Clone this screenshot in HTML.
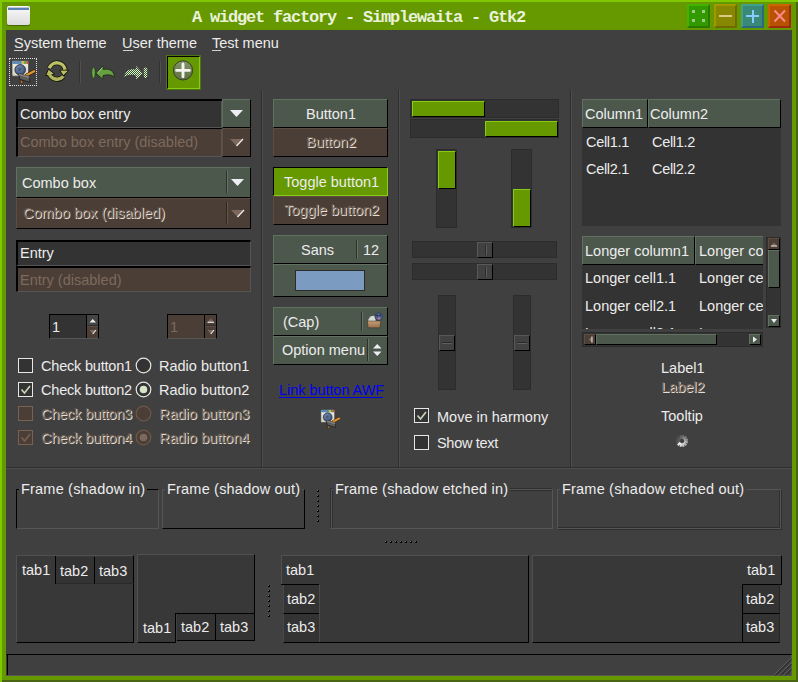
<!DOCTYPE html>
<html><head><meta charset="utf-8">
<style>
*{margin:0;padding:0;box-sizing:border-box}
html,body{width:798px;height:682px;overflow:hidden}
body{position:relative;background:#669900;font-family:"Liberation Sans",sans-serif;font-size:14.5px;color:#ececec}
.a{position:absolute}
.t{position:absolute;white-space:nowrap;line-height:17px;font-size:14.5px}
svg{position:absolute;overflow:visible}
/* widgets */
.btn{position:absolute;background:#4d584d;border-top:1px solid #627062;border-left:1px solid #627062;border-right:1px solid #000;border-bottom:1px solid #000}
.btnd{position:absolute;background:#4a3e37;border-top:1px solid #5e4c40;border-left:1px solid #5e4c40;border-right:1px solid #000;border-bottom:1px solid #000}
.ent{position:absolute;background:#333;border-top:2px solid #000;border-left:2px solid #000;border-right:1px solid #555;border-bottom:1px solid #555}
.entd{position:absolute;background:#4a3e37;border-top:2px solid #000;border-left:2px solid #000;border-right:1px solid #555;border-bottom:1px solid #555}
.dis{color:#7d6a5c}
.emb{color:#6e5d51;text-shadow:1px 1px 0 #e6e0da}
.vsep{position:absolute;width:2px;border-left:1px solid #2e2e2e;border-right:1px solid #4e4e4e}
.hsep{position:absolute;height:2px;border-top:1px solid #2e2e2e;border-bottom:1px solid #4e4e4e}
.trough{position:absolute;background:#333;border:1px solid #2c2c2c}
.bar{position:absolute;background:#669900;border-top:1px solid #88cc11;border-left:1px solid #88cc11;border-right:1px solid #000;border-bottom:1px solid #000}
.chk{position:absolute;width:15px;height:15px;border:1px solid #e6e6e6;background:#333}
.chkd{position:absolute;width:15px;height:15px;border:1px solid #7a6252;background:#4a3e37}
.tab{position:absolute;background:#333}
.nb{position:absolute;background:#383838}
</style></head><body>
<svg width="0" height="0" style="position:absolute">
<defs>
<linearGradient id="gwin" x1="0" y1="0" x2="0" y2="1"><stop offset="0" stop-color="#f2efe4"/><stop offset="1" stop-color="#d6d2c2"/></linearGradient>
<radialGradient id="gglobe" cx="0.4" cy="0.35" r="0.7"><stop offset="0" stop-color="#7890b8"/><stop offset="1" stop-color="#34486c"/></radialGradient>
<pattern id="dith" width="2" height="2" patternUnits="userSpaceOnUse"><rect width="2" height="2" fill="#2f5a22"/><rect width="1" height="1" fill="#e8f0e0"/><rect x="1" y="1" width="1" height="1" fill="#e8f0e0"/></pattern>
<symbol id="icoapp" viewBox="0 0 24 24">
<rect x="1" y="0.8" width="16.6" height="15.4" rx="1" fill="url(#gwin)" stroke="#2a2a2a" stroke-width="0.6"/>
<rect x="1.3" y="1.1" width="9.4" height="2.8" fill="#5a88b4"/>
<rect x="10.7" y="1.1" width="2.4" height="2.8" fill="#c8bc50"/>
<rect x="13.1" y="1.1" width="2.3" height="2.8" fill="#58a040"/>
<rect x="15.4" y="1.1" width="2" height="2.8" fill="#c44a40"/>
<circle cx="9.2" cy="9.8" r="5.3" fill="url(#gglobe)" stroke="#1e2a40" stroke-width="0.8"/>
<path d="M6.5 8 Q9 6.5 11 8.5 Q10 11 7.5 11.5 Z" fill="#3a4c68" opacity="0.7"/>
<path d="M23 11.2 L16 15" stroke="#2a1a08" stroke-width="3.4" stroke-linecap="round"/>
<path d="M23 11.2 L16 15" stroke="#e4952e" stroke-width="2.4" stroke-linecap="round"/>
<path d="M9.8 20 L11.8 20.4 L11.3 23.6 L9.4 23.2 Z" fill="#c07828" stroke="#2a1a08" stroke-width="0.5"/>
<path d="M8 13.6 L18.3 16.5 L18.8 22.2 L8.4 19.2 Z" fill="#5e5c5a" stroke="#1a1a1a" stroke-width="0.8"/>
<path d="M8 13.6 L18.3 16.5 L18.4 18.2 L8.1 15.3 Z" fill="#85827e"/>
</symbol>
</defs></svg>
<!-- window frame -->
<div class="a" style="left:0;top:0;width:798px;height:2px;background:#80c800"></div>
<div class="a" style="left:0;top:0;width:2px;height:682px;background:#80c800"></div>
<div class="a" style="left:796px;top:0;width:2px;height:682px;background:#4a6614"></div>
<div class="a" style="left:0;top:680px;width:798px;height:2px;background:#4a6614"></div>
<div class="a" style="left:796px;top:0;width:2px;height:2px;background:#80c800"></div>
<div class="a" style="left:0;top:680px;width:2px;height:2px;background:#80c800"></div>
<!-- content -->
<div class="a" id="content" style="left:6px;top:30px;width:786px;height:646px;background:#404040"></div>

<!-- title icon -->
<div class="a" style="left:7px;top:6px;width:23px;height:19px;border-radius:2px;background:linear-gradient(#fafafa,#dcdcdc);box-shadow:0 1px 1px rgba(0,0,0,.35)"></div>
<div class="a" style="left:8px;top:7px;width:21px;height:3px;background:#5a80b8;border-top:1px solid #c0c8d0"></div>
<!-- title -->
<div class="t" style="left:192px;top:9px;font-family:'Liberation Mono',monospace;font-weight:bold;font-size:17px;letter-spacing:-1.2px;color:#eaf2dc">A widget factory - Simplewaita - Gtk2</div>
<!-- title buttons -->
<div class="a" style="left:687px;top:4px;width:23px;height:24px;background:#339900;border-top:2px solid #44b300;border-left:2px solid #44b300;border-right:2px solid #2a7a00;border-bottom:2px solid #2a7a00"></div>
<div class="a" style="left:692px;top:10px;width:3px;height:3px;background:#99cc88"></div>
<div class="a" style="left:702px;top:10px;width:3px;height:3px;background:#99cc88"></div>
<div class="a" style="left:692px;top:19px;width:3px;height:3px;background:#99cc88"></div>
<div class="a" style="left:702px;top:19px;width:3px;height:3px;background:#99cc88"></div>
<div class="a" style="left:714px;top:4px;width:23px;height:24px;background:#888800;border-top:2px solid #a09a00;border-left:2px solid #a09a00;border-right:2px solid #6e6a00;border-bottom:2px solid #6e6a00"></div>
<div class="a" style="left:719px;top:15px;width:13px;height:2px;background:#ddc98a"></div>
<div class="a" style="left:741px;top:4px;width:23px;height:24px;background:#3a8877;border-top:2px solid #44a08a;border-left:2px solid #44a08a;border-right:2px solid #2a6a80;border-bottom:2px solid #2a6a80"></div>
<div class="a" style="left:746px;top:15px;width:13px;height:2px;background:#88ccff"></div>
<div class="a" style="left:751.5px;top:9.5px;width:2px;height:13px;background:#88ccff"></div>
<div class="a" style="left:768px;top:4px;width:23px;height:24px;background:#b85200;border-top:2px solid #cc6600;border-left:2px solid #cc6600;border-right:2px solid #a02a10;border-bottom:2px solid #a02a10"></div>
<svg style="left:768px;top:4px" width="23" height="24"><path d="M6.5 6.5 L17 17.5 M17 6.5 L6.5 17.5" stroke="#ff8a90" stroke-width="1.9"/></svg>

<!-- menubar -->
<div class="t" style="left:14px;top:35px">System theme</div>
<div class="t" style="left:122px;top:35px">User theme</div>
<div class="t" style="left:212px;top:35px">Test menu</div>
<div class="a" style="left:14px;top:50px;width:9px;height:1px;background:#d0d0d0"></div>
<div class="a" style="left:123px;top:50px;width:10px;height:1px;background:#d0d0d0"></div>
<div class="a" style="left:212px;top:50px;width:9px;height:1px;background:#d0d0d0"></div>

<!-- toolbar -->
<div class="a" style="left:9px;top:58px;width:28px;height:28px;border:1px dotted #e0e0e0"></div>
<div class="a" style="left:166px;top:55px;width:35px;height:35px;border:1px solid #4f7412"></div><div class="a" style="left:167px;top:56px;width:33px;height:33px;background:#669900;border-top:1px solid #000;border-left:1px solid #000;border-right:1px solid #88cc11;border-bottom:1px solid #88cc11"></div>
<div class="a" style="left:79px;top:61px;width:2px;height:22px;border-left:1px solid #333;border-right:1px solid #505050"></div>
<div class="a" style="left:159px;top:61px;width:2px;height:22px;border-left:1px solid #333;border-right:1px solid #505050"></div>


<!-- ===== column 1 ===== -->
<div class="ent" style="left:16px;top:99px;width:206px;height:29px;border-right-width:0"></div>
<div class="a" style="left:221px;top:101px;width:1px;height:27px;background:#555"></div>
<div class="t" style="left:20px;top:106px">Combo box entry</div>
<div class="btn" style="left:222px;top:99px;width:29px;height:29px"></div>
<svg style="left:0;top:0" width="1" height="1"><path d="M230 110 H243 L236.5 117 Z" fill="#eceef4"/></svg>
<div class="entd" style="left:16px;top:128px;width:206px;height:29px;border-top-width:1px;border-right-width:0"></div>
<div class="a" style="left:221px;top:129px;width:1px;height:28px;background:#555"></div>
<div class="t dis" style="left:20px;top:134px">Combo box entry (disabled)</div>
<div class="btnd" style="left:222px;top:128px;width:29px;height:29px"></div>
<svg style="left:0;top:0" width="1" height="1"><path d="M230 139 H243 L236.5 146 Z" fill="#7c685c"/><path d="M243 139 L236.5 146" stroke="#f0f0f0" stroke-width="1.2"/></svg>

<div class="btn" style="left:16px;top:167px;width:235px;height:31px"></div>
<div class="t" style="left:22px;top:175px">Combo box</div>
<div class="a" style="left:226px;top:171px;width:2px;height:22px;border-left:1px solid #2e2e2e;border-right:1px solid #667466"></div>
<svg style="left:0;top:0" width="1" height="1"><path d="M231 179 H244 L237.5 186 Z" fill="#eceef4"/></svg>
<div class="btnd" style="left:16px;top:198px;width:235px;height:31px"></div>
<div class="t emb" style="left:23px;top:205px">Combo box (disabled)</div>
<div class="a" style="left:226px;top:202px;width:2px;height:22px;border-left:1px solid #2e2622;border-right:1px solid #6a5444"></div>
<svg style="left:0;top:0" width="1" height="1"><path d="M231 210 H244 L237.5 217 Z" fill="#7c685c"/><path d="M244 210 L237.5 217" stroke="#f0f0f0" stroke-width="1.2"/></svg>

<div class="ent" style="left:16px;top:240px;width:235px;height:26px"></div>
<div class="t" style="left:20px;top:245px">Entry</div>
<div class="entd" style="left:16px;top:266px;width:235px;height:26px"></div>
<div class="t dis" style="left:20px;top:272px">Entry (disabled)</div>

<!-- spin buttons -->
<div class="a" style="left:49px;top:314px;width:50px;height:25px;background:#333;border-top:1px solid #000;border-left:1px solid #000;border-right:1px solid #000;border-bottom:1px solid #555"></div>
<div class="a" style="left:86px;top:315px;width:1px;height:23px;background:#000"></div>
<div class="a" style="left:87px;top:315px;width:11px;height:11px;background:#454545;border-bottom:1px solid #2e2e2e"></div>
<div class="a" style="left:87px;top:326px;width:11px;height:12px;background:#4a3e37;border-top:1px solid #5e4c40"></div>
<svg style="left:0;top:0" width="1" height="1"><path d="M89.5 322.5 H96 L92.75 319 Z" fill="#f0f0f0"/><path d="M89.5 330 H96 L92.75 334 Z" fill="#7c685c"/><path d="M96 330 L92.75 334" stroke="#f0f0f0" stroke-width="1.1"/></svg>
<div class="t" style="left:52px;top:319px">1</div>
<div class="a" style="left:167px;top:314px;width:50px;height:25px;background:#4a3e37;border-top:1px solid #000;border-left:1px solid #000;border-right:1px solid #000;border-bottom:1px solid #555"></div>
<div class="a" style="left:204px;top:315px;width:1px;height:23px;background:#000"></div>
<div class="a" style="left:205px;top:315px;width:11px;height:11px;background:#4a3e37;border-bottom:1px solid #2e2e2e"></div>
<div class="a" style="left:205px;top:326px;width:11px;height:12px;background:#4a3e37;border-top:1px solid #5e4c40"></div>
<svg style="left:0;top:0" width="1" height="1"><path d="M207.5 322 H214 L210.75 318.5 Z" fill="#7c685c"/><path d="M207.5 322.3 H214" stroke="#f0f0f0" stroke-width="1.1"/><path d="M207.5 330 H214 L210.75 334 Z" fill="#7c685c"/><path d="M214 330 L210.75 334" stroke="#f0f0f0" stroke-width="1.1"/></svg>
<div class="t dis" style="left:170px;top:319px">1</div>

<!-- check / radio -->
<div class="chk" style="left:18px;top:358px"></div>
<div class="t" style="left:41px;letter-spacing:-0.2px;top:358px">Check button1</div>
<div class="chk" style="left:18px;top:382px"></div>
<svg style="left:0;top:0" width="1" height="1"><path d="M21.5 389.5 L24.5 393 L30 386" stroke="#c8d8b8" stroke-width="1.6" fill="none"/></svg>
<div class="t" style="left:41px;letter-spacing:-0.2px;top:382px">Check button2</div>
<div class="chkd" style="left:18px;top:406px"></div>
<div class="t emb" style="left:41px;letter-spacing:-0.2px;top:406px">Check button3</div>
<div class="chkd" style="left:18px;top:430px"></div>
<svg style="left:0;top:0" width="1" height="1"><path d="M21.5 437.5 L24.5 441 L30 434" stroke="#7a6252" stroke-width="1.6" fill="none"/></svg>
<div class="t emb" style="left:41px;letter-spacing:-0.2px;top:430px">Check button4</div>
<svg style="left:0;top:0" width="1" height="1">
<circle cx="143.5" cy="365.5" r="7.3" fill="#333" stroke="#e6e6e6" stroke-width="1.2"/>
<circle cx="143.5" cy="389.5" r="7.3" fill="#333" stroke="#e6e6e6" stroke-width="1.2"/>
<circle cx="143.5" cy="389.5" r="3.8" fill="#d8e4c8"/>
<circle cx="143.5" cy="413.5" r="7.3" fill="#4a3e37" stroke="#6e5848" stroke-width="1.2"/>
<circle cx="143.5" cy="437.5" r="7.3" fill="#4a3e37" stroke="#6e5848" stroke-width="1.2"/>
<circle cx="143.5" cy="437.5" r="3.8" fill="#7c685c"/>
</svg>
<div class="t" style="left:159px;top:358px">Radio button1</div>
<div class="t" style="left:159px;top:382px">Radio button2</div>
<div class="t emb" style="left:159px;top:406px">Radio button3</div>
<div class="t emb" style="left:159px;top:430px">Radio button4</div>


<!-- ===== column 2 ===== -->
<div class="btn" style="left:273px;top:99px;width:115px;height:29px"></div>
<div class="t" style="left:306px;top:106px">Button1</div>
<div class="btnd" style="left:273px;top:128px;width:115px;height:29px"></div>
<div class="t emb" style="left:306px;top:134px">Button2</div>
<div class="a" style="left:273px;top:167px;width:115px;height:29px;background:#669900;border-top:1px solid #000;border-left:1px solid #000;border-right:1px solid #88cc11;border-bottom:1px solid #88cc11"></div>
<div class="t" style="left:284px;top:174px">Toggle button1</div>
<div class="btnd" style="left:273px;top:196px;width:115px;height:29px"></div>
<div class="t emb" style="left:284px;top:202px">Toggle button2</div>
<div class="btn" style="left:273px;top:235px;width:115px;height:29px"></div>
<div class="t" style="left:301px;top:242px">Sans</div>
<div class="a" style="left:356px;top:240px;width:2px;height:19px;border-left:1px solid #2e2e2e;border-right:1px solid #667466"></div>
<div class="t" style="left:363px;top:242px">12</div>
<div class="btn" style="left:273px;top:264px;width:115px;height:33px"></div>
<div class="a" style="left:295px;top:270px;width:70px;height:21px;background:#7b9bc0;border:1px solid #2f2b28"></div>
<div class="btn" style="left:273px;top:307px;width:115px;height:29px"></div>
<div class="t" style="left:283px;top:314px">(Cap)</div>
<div class="a" style="left:361px;top:312px;width:2px;height:19px;border-left:1px solid #2e2e2e;border-right:1px solid #667466"></div>
<svg style="left:0;top:0" width="1" height="1">
<defs><linearGradient id="gbask" x1="0" y1="0" x2="0" y2="1"><stop offset="0" stop-color="#c89e74"/><stop offset="1" stop-color="#9a7050"/></linearGradient></defs>
<path d="M369 318.5 Q370 315.5 372.5 316 Q374.5 315 375.5 317.5 Q376.5 320 375 321.5 H368.5 Q367.5 320 369 318.5 Z" fill="#d6d6d4"/>
<circle cx="378.8" cy="316.6" r="3.9" fill="#4a6090" stroke="#26324a" stroke-width="0.6"/>
<circle cx="377.2" cy="315.6" r="0.8" fill="#1a2030"/><circle cx="380.3" cy="315.4" r="0.8" fill="#1a2030"/>
<ellipse cx="379" cy="318.4" rx="1.4" ry="0.9" fill="#e07a70"/>
<path d="M367.5 321 H380.5 L380 327.8 H368 Z" fill="url(#gbask)" stroke="#3a2a1c" stroke-width="0.5"/>
</svg>
<div class="btn" style="left:273px;top:336px;width:115px;height:29px"></div>
<div class="t" style="left:282px;top:342px">Option menu</div>
<div class="a" style="left:367px;top:339px;width:2px;height:22px;border-left:1px solid #2e2e2e;border-right:1px solid #667466"></div>
<svg style="left:0;top:0" width="1" height="1"><path d="M373 348.5 H381.5 L377.25 344 Z M373 351.5 H381.5 L377.25 356 Z" fill="#eceef4"/></svg>
<div class="t" style="left:279px;top:382px;color:#0000ee;letter-spacing:-0.05px">Link button AWF</div>
<div class="a" style="left:279px;top:397px;width:104px;height:1px;background:#0000ee"></div>
<svg style="left:320px;top:409px" width="20" height="20" viewBox="0 0 24 24"><use href="#icoapp"/></svg>

<!-- ===== column 3 ===== -->
<div class="trough" style="left:410px;top:99px;width:149px;height:19px"></div>
<div class="bar" style="left:412px;top:101px;width:73px;height:16px"></div>
<div class="trough" style="left:410px;top:119px;width:149px;height:19px"></div>
<div class="bar" style="left:485px;top:121px;width:73px;height:16px"></div>
<div class="trough" style="left:436px;top:149px;width:21px;height:79px"></div>
<div class="bar" style="left:438px;top:151px;width:18px;height:38px"></div>
<div class="trough" style="left:511px;top:149px;width:21px;height:79px"></div>
<div class="bar" style="left:513px;top:189px;width:18px;height:38px"></div>
<div class="trough" style="left:412px;top:241px;width:145px;height:17px"></div>
<div class="btn" style="left:477px;top:242px;width:16px;height:16px;background:#414141;border-top-color:#585858;border-left-color:#585858"></div>
<div class="a" style="left:485px;top:245px;width:2px;height:10px;border-left:1px solid #2a2a2a;border-right:1px solid #5e5e5e"></div>
<div class="trough" style="left:412px;top:263px;width:145px;height:17px"></div>
<div class="btn" style="left:477px;top:264px;width:16px;height:16px;background:#414141;border-top-color:#585858;border-left-color:#585858"></div>
<div class="a" style="left:485px;top:267px;width:2px;height:10px;border-left:1px solid #2a2a2a;border-right:1px solid #5e5e5e"></div>
<div class="trough" style="left:438px;top:295px;width:18px;height:95px"></div>
<div class="btn" style="left:439px;top:335px;width:16px;height:16px;background:#414141;border-top-color:#585858;border-left-color:#585858"></div>
<div class="a" style="left:442px;top:342px;width:10px;height:2px;border-top:1px solid #2a2a2a;border-bottom:1px solid #5e5e5e"></div>
<div class="trough" style="left:513px;top:295px;width:18px;height:95px"></div>
<div class="btn" style="left:514px;top:335px;width:16px;height:16px;background:#414141;border-top-color:#585858;border-left-color:#585858"></div>
<div class="a" style="left:517px;top:342px;width:10px;height:2px;border-top:1px solid #2a2a2a;border-bottom:1px solid #5e5e5e"></div>
<div class="chk" style="left:414px;top:408px"></div>
<svg style="left:0;top:0" width="1" height="1"><path d="M417.5 415.5 L420.5 419 L426 412" stroke="#c8d8b8" stroke-width="1.6" fill="none"/></svg>
<div class="t" style="left:437px;top:409px">Move in harmony</div>
<div class="chk" style="left:414px;top:435px"></div>
<div class="t" style="left:437px;top:435px;letter-spacing:-0.3px">Show text</div>

<!-- ===== column 4 ===== -->
<div class="a" style="left:582px;top:99px;width:199px;height:127px;background:#333"></div>
<div class="btn" style="left:582px;top:99px;width:66px;height:29px"></div>
<div class="btn" style="left:648px;top:99px;width:133px;height:29px"></div>
<div class="t" style="left:585px;top:106px">Column1</div>
<div class="t" style="left:650px;top:106px">Column2</div>
<div class="t" style="left:586px;top:134px;letter-spacing:-0.3px">Cell1.1</div>
<div class="t" style="left:652px;top:134px;letter-spacing:-0.3px">Cell1.2</div>
<div class="t" style="left:586px;top:161px;letter-spacing:-0.3px">Cell2.1</div>
<div class="t" style="left:652px;top:161px;letter-spacing:-0.3px">Cell2.2</div>

<div class="a" style="left:582px;top:236px;width:181px;height:93px;background:#333;overflow:hidden">
 <div class="btn" style="left:0;top:0;width:113px;height:29px"></div>
 <div class="btn" style="left:113px;top:0;width:80px;height:29px"></div>
 <div class="t" style="left:3px;top:7px">Longer column1</div>
 <div class="t" style="left:117px;top:7px">Longer column2</div>
 <div class="t" style="left:3px;top:34px">Longer cell1.1</div>
 <div class="t" style="left:117px;top:34px">Longer cell1.2</div>
 <div class="t" style="left:3px;top:62px">Longer cell2.1</div>
 <div class="t" style="left:117px;top:62px">Longer cell2.2</div>
 <div class="t" style="left:3px;top:89px">Longer cell3.1</div>
 <div class="t" style="left:117px;top:89px">Longer cell3.2</div>
</div>
<div class="trough" style="left:766px;top:237px;width:15px;height:91px"></div>
<div class="btnd" style="left:768px;top:238px;width:12px;height:12px"></div>
<div class="btn" style="left:768px;top:250px;width:12px;height:38px"></div>
<div class="btn" style="left:768px;top:315px;width:12px;height:12px"></div>
<svg style="left:0;top:0" width="1" height="1"><path d="M771 246 H777 L774 242.5 Z" fill="#7c685c"/><path d="M771 246 H777" stroke="#f0f0f0" stroke-width="1"/><path d="M771 319 H777 L774 323 Z" fill="#eceef4"/></svg>
<div class="trough" style="left:582px;top:332px;width:181px;height:15px"></div>
<div class="btnd" style="left:584px;top:334px;width:12px;height:11px"></div>
<div class="btn" style="left:596px;top:334px;width:121px;height:11px"></div>
<div class="btn" style="left:749px;top:334px;width:12px;height:11px"></div>
<svg style="left:0;top:0" width="1" height="1"><path d="M592 336.5 V342.5 L588.5 339.5 Z" fill="#7c685c"/><path d="M592 336.5 V342.5" stroke="#f0f0f0" stroke-width="1"/><path d="M753 336.5 V342.5 L757 339.5 Z" fill="#eceef4"/></svg>

<div class="t" style="left:661px;top:360px">Label1</div>
<div class="t emb" style="left:661px;top:379px">Label2</div>
<div class="t" style="left:661px;top:408px">Tooltip</div>
<svg style="left:0;top:0" width="1" height="1"><line x1="680.44" y1="442.56" x2="677.76" y2="445.24" stroke="#f0f0f0" stroke-opacity="1.00" stroke-width="2"/><line x1="681.43" y1="443.13" x2="680.45" y2="446.80" stroke="#f0f0f0" stroke-opacity="0.90" stroke-width="2"/><line x1="682.57" y1="443.13" x2="683.55" y2="446.80" stroke="#f0f0f0" stroke-opacity="0.80" stroke-width="2"/><line x1="683.56" y1="442.56" x2="686.24" y2="445.24" stroke="#f0f0f0" stroke-opacity="0.70" stroke-width="2"/><line x1="684.13" y1="441.57" x2="687.80" y2="442.55" stroke="#f0f0f0" stroke-opacity="0.60" stroke-width="2"/><line x1="684.13" y1="440.43" x2="687.80" y2="439.45" stroke="#f0f0f0" stroke-opacity="0.50" stroke-width="2"/><line x1="683.56" y1="439.44" x2="686.24" y2="436.76" stroke="#f0f0f0" stroke-opacity="0.40" stroke-width="2"/><line x1="682.57" y1="438.87" x2="683.55" y2="435.20" stroke="#f0f0f0" stroke-opacity="0.30" stroke-width="2"/><line x1="681.43" y1="438.87" x2="680.45" y2="435.20" stroke="#f0f0f0" stroke-opacity="0.20" stroke-width="2"/><line x1="680.44" y1="439.44" x2="677.76" y2="436.76" stroke="#f0f0f0" stroke-opacity="0.12" stroke-width="2"/><line x1="679.87" y1="440.43" x2="676.20" y2="439.45" stroke="#f0f0f0" stroke-opacity="0.12" stroke-width="2"/><line x1="679.87" y1="441.57" x2="676.20" y2="442.55" stroke="#f0f0f0" stroke-opacity="0.12" stroke-width="2"/></svg>

<!-- ===== bottom ===== -->
<div class="a" style="left:16px;top:489px;width:143px;height:40px;border-top:1px solid #000;border-left:1px solid #000;border-right:1px solid #555;border-bottom:1px solid #555"></div>
<div class="t" style="left:19px;top:481px;letter-spacing:0.2px;background:#404040;padding:0 2px 0 2px">Frame (shadow in)</div>
<div class="a" style="left:162px;top:489px;width:143px;height:40px;border-top:1px solid #555;border-left:1px solid #555;border-right:1px solid #000;border-bottom:1px solid #000"></div>
<div class="t" style="left:165px;top:481px;letter-spacing:0.2px;background:#404040;padding:0 2px 0 2px">Frame (shadow out)</div>
<div class="a" style="left:331px;top:489px;width:222px;height:40px;border:1px solid #555;box-shadow:inset 1px 1px 0 #2e2e2e, -1px -1px 0 #2e2e2e"></div>
<div class="t" style="left:333px;top:481px;letter-spacing:0.2px;background:#404040;padding:0 2px 0 2px">Frame (shadow etched in)</div>
<div class="a" style="left:557px;top:489px;width:224px;height:40px;border:1px solid #555;box-shadow:inset -1px -1px 0 #2e2e2e, 1px 1px 0 #2e2e2e"></div>
<div class="t" style="left:560px;top:481px;letter-spacing:0.2px;background:#404040;padding:0 2px 0 2px">Frame (shadow etched out)</div>

<!-- notebooks -->
<div class="nb" style="left:16px;top:555px;width:118px;height:88px;border-top:1px solid #505050;border-left:1px solid #505050;border-right:1px solid #000;border-bottom:1px solid #000"></div>
<div class="a" style="left:55px;top:556px;width:1px;height:28px;background:#000"></div>
<div class="tab" style="left:56px;top:557px;width:39px;height:27px;border-right:1px solid #000;border-bottom:1px solid #2a2a2a"></div>
<div class="tab" style="left:95px;top:557px;width:39px;height:27px;border-right:1px solid #000;border-bottom:1px solid #2a2a2a"></div>
<div class="t" style="left:22px;top:562px">tab1</div>
<div class="t" style="left:60px;top:563px">tab2</div>
<div class="t" style="left:99px;top:563px">tab3</div>

<div class="nb" style="left:137px;top:554px;width:118px;height:60px;border-top:1px solid #505050;border-left:1px solid #505050;border-right:1px solid #000;border-bottom:1px solid #000"></div>
<div class="nb" style="left:137px;top:613px;width:39px;height:30px;border-left:1px solid #505050;border-right:1px solid #000;border-bottom:1px solid #000"></div>
<div class="tab" style="left:177px;top:614px;width:39px;height:27px;border-right:1px solid #000;border-bottom:1px solid #000"></div>
<div class="tab" style="left:216px;top:614px;width:39px;height:27px;border-right:1px solid #000;border-bottom:1px solid #000"></div>
<div class="t" style="left:143px;top:620px">tab1</div>
<div class="t" style="left:181px;top:619px">tab2</div>
<div class="t" style="left:220px;top:619px">tab3</div>

<div class="nb" style="left:281px;top:555px;width:248px;height:88px;border-top:1px solid #505050;border-left:1px solid #505050;border-right:1px solid #000;border-bottom:1px solid #000"></div>
<div class="a" style="left:281px;top:584px;width:38px;height:1px;background:#000"></div>
<div class="tab" style="left:281px;top:585px;width:38px;height:58px;background:#404040"></div>
<div class="tab" style="left:283px;top:585px;width:36px;height:29px;border-left:1px solid #484848;border-bottom:1px solid #000"></div>
<div class="tab" style="left:283px;top:614px;width:36px;height:29px;border-left:1px solid #484848;border-bottom:1px solid #000"></div>
<div class="a" style="left:319px;top:585px;width:1px;height:57px;background:#4a4a4a"></div>
<div class="t" style="left:286px;top:562px">tab1</div>
<div class="t" style="left:287px;top:591px">tab2</div>
<div class="t" style="left:287px;top:619px">tab3</div>

<div class="nb" style="left:532px;top:555px;width:211px;height:88px;border-top:1px solid #505050;border-left:1px solid #505050;border-bottom:1px solid #000"></div>
<div class="nb" style="left:742px;top:555px;width:40px;height:29px;border-top:1px solid #505050;border-right:1px solid #000"></div>
<div class="a" style="left:742px;top:584px;width:40px;height:1px;background:#000"></div>
<div class="tab" style="left:742px;top:584px;width:38px;height:30px;border-top:1px solid #000;border-left:1px solid #000;border-right:1px solid #262626;border-bottom:1px solid #000"></div>
<div class="tab" style="left:742px;top:613px;width:38px;height:30px;border-top:1px solid #000;border-left:1px solid #000;border-right:1px solid #262626;border-bottom:1px solid #000"></div>
<div class="t" style="left:747px;top:562px">tab1</div>
<div class="t" style="left:746px;top:591px">tab2</div>
<div class="t" style="left:746px;top:619px">tab3</div>
<svg style="left:0;top:0" width="1" height="1"><rect x="317" y="490" width="2" height="2" fill="#000"/><rect x="317" y="490" width="1" height="1" fill="#6c6c6c"/><rect x="317" y="495" width="2" height="2" fill="#000"/><rect x="317" y="495" width="1" height="1" fill="#6c6c6c"/><rect x="317" y="500" width="2" height="2" fill="#000"/><rect x="317" y="500" width="1" height="1" fill="#6c6c6c"/><rect x="317" y="505" width="2" height="2" fill="#000"/><rect x="317" y="505" width="1" height="1" fill="#6c6c6c"/><rect x="317" y="510" width="2" height="2" fill="#000"/><rect x="317" y="510" width="1" height="1" fill="#6c6c6c"/><rect x="317" y="515" width="2" height="2" fill="#000"/><rect x="317" y="515" width="1" height="1" fill="#6c6c6c"/><rect x="317" y="520" width="2" height="2" fill="#000"/><rect x="317" y="520" width="1" height="1" fill="#6c6c6c"/><rect x="268" y="585" width="2" height="2" fill="#000"/><rect x="268" y="585" width="1" height="1" fill="#6c6c6c"/><rect x="268" y="590" width="2" height="2" fill="#000"/><rect x="268" y="590" width="1" height="1" fill="#6c6c6c"/><rect x="268" y="595" width="2" height="2" fill="#000"/><rect x="268" y="595" width="1" height="1" fill="#6c6c6c"/><rect x="268" y="600" width="2" height="2" fill="#000"/><rect x="268" y="600" width="1" height="1" fill="#6c6c6c"/><rect x="268" y="605" width="2" height="2" fill="#000"/><rect x="268" y="605" width="1" height="1" fill="#6c6c6c"/><rect x="268" y="610" width="2" height="2" fill="#000"/><rect x="268" y="610" width="1" height="1" fill="#6c6c6c"/><rect x="268" y="615" width="2" height="2" fill="#000"/><rect x="268" y="615" width="1" height="1" fill="#6c6c6c"/><rect x="385" y="541" width="2" height="2" fill="#000"/><rect x="385" y="541" width="1" height="1" fill="#6c6c6c"/><rect x="390" y="541" width="2" height="2" fill="#000"/><rect x="390" y="541" width="1" height="1" fill="#6c6c6c"/><rect x="395" y="541" width="2" height="2" fill="#000"/><rect x="395" y="541" width="1" height="1" fill="#6c6c6c"/><rect x="400" y="541" width="2" height="2" fill="#000"/><rect x="400" y="541" width="1" height="1" fill="#6c6c6c"/><rect x="405" y="541" width="2" height="2" fill="#000"/><rect x="405" y="541" width="1" height="1" fill="#6c6c6c"/><rect x="410" y="541" width="2" height="2" fill="#000"/><rect x="410" y="541" width="1" height="1" fill="#6c6c6c"/><rect x="415" y="541" width="2" height="2" fill="#000"/><rect x="415" y="541" width="1" height="1" fill="#6c6c6c"/></svg>


<svg style="left:11px;top:60px" width="24" height="24"><use href="#icoapp"/></svg>
<svg style="left:45px;top:60px" width="24" height="24">
<g transform="translate(12,11)">
<path d="M-7.7 -2.8 A8.2 8.2 0 0 1 8.08 -1.42" stroke="#1a1a0c" stroke-width="5" fill="none"/>
<path d="M6.28 5.27 A8.2 8.2 0 0 1 -7.92 2.12" stroke="#1a1a0c" stroke-width="5" fill="none"/>
<path d="M2.7 -0.8 L11.6 -0.8 L6.5 4.8 Z M-2.6 3 L-11.2 4.8 L-8.6 -1.6 Z" fill="#b8bc62" stroke="#1a1a0c" stroke-width="1.1" stroke-linejoin="round"/>
<path d="M-7.7 -2.8 A8.2 8.2 0 0 1 8.08 -1.42" stroke="#bcc068" stroke-width="3.4" fill="none"/>
<path d="M6.28 5.27 A8.2 8.2 0 0 1 -7.92 2.12" stroke="#b0b45c" stroke-width="3.4" fill="none"/>
<path d="M3.5 -0.3 L10.8 -0.3 L6.5 4.1 Z M-3.3 2.8 L-10.5 4.3 L-8.3 -0.9 Z" fill="#b8bc62"/>
</g></svg>
<svg style="left:88px;top:60px" width="30" height="24">
<ellipse cx="5.5" cy="12.8" rx="1.9" ry="5.4" fill="#6aa848" stroke="#1a2a10" stroke-width="0.7"/>
<path d="M8.2 13.6 L14.8 6 L15 9.2 L19.5 9.2 Q25.5 9.6 26.6 17 Q23.5 14.3 18.5 14.8 L15 15.6 L14.8 19.2 Z" fill="#66a040" stroke="#1a2a10" stroke-width="0.8"/>
<path d="M9.5 13 L14.5 7.3" stroke="#a0d880" stroke-width="0.9"/>
</svg>
<svg style="left:121px;top:60px" width="30" height="24">
<g transform="translate(30,0) scale(-1,1)">
<rect x="3.8" y="7.5" width="3.4" height="10.6" rx="1.7" fill="url(#dith)"/>
<path d="M8.2 13.6 L14.8 6 L15 9.2 L19.5 9.2 Q25.5 9.6 26.6 17 Q23.5 14.3 18.5 14.8 L15 15.6 L14.8 19.2 Z" fill="url(#dith)"/>
</g></svg>
<svg style="left:166px;top:55px" width="35" height="35">
<defs><linearGradient id="gplus" x1="0" y1="0" x2="0" y2="1"><stop offset="0" stop-color="#84966a"/><stop offset="1" stop-color="#5e7040"/></linearGradient></defs><circle cx="17" cy="15.4" r="9.6" fill="url(#gplus)" stroke="#34402a" stroke-width="1"/>
<path d="M17 9 V21.8 M10.6 15.4 H23.4" stroke="#f4f4f0" stroke-width="2.9" stroke-linecap="round"/>
</svg>

<!-- pane separators -->
<div class="vsep" style="left:261px;top:90px;height:377px"></div>
<div class="vsep" style="left:398px;top:90px;height:377px"></div>
<div class="vsep" style="left:570px;top:90px;height:377px"></div>
<div class="hsep" style="left:6px;top:467px;width:786px"></div>

<!-- statusbar -->
<div class="a" style="left:6px;top:654px;width:786px;height:22px;border-top:1px solid #000;border-left:1px solid #3a3a3a;border-right:1px solid #5a5a5a;border-bottom:1px solid #555"></div><div class="a" style="left:7px;top:655px;width:1px;height:20px;background:#000"></div>

<svg style="left:0;top:0" width="1" height="1"><path d="M774 675 L791 658" stroke="#5c5c5c" stroke-width="1"/><path d="M775.2 675.5 L791.5 659.2" stroke="#262626" stroke-width="1"/><path d="M779 675 L791 663" stroke="#5c5c5c" stroke-width="1"/><path d="M780.2 675.5 L791.5 664.2" stroke="#262626" stroke-width="1"/><path d="M784 675 L791 668" stroke="#5c5c5c" stroke-width="1"/><path d="M785.2 675.5 L791.5 669.2" stroke="#262626" stroke-width="1"/></svg>
</body></html>
